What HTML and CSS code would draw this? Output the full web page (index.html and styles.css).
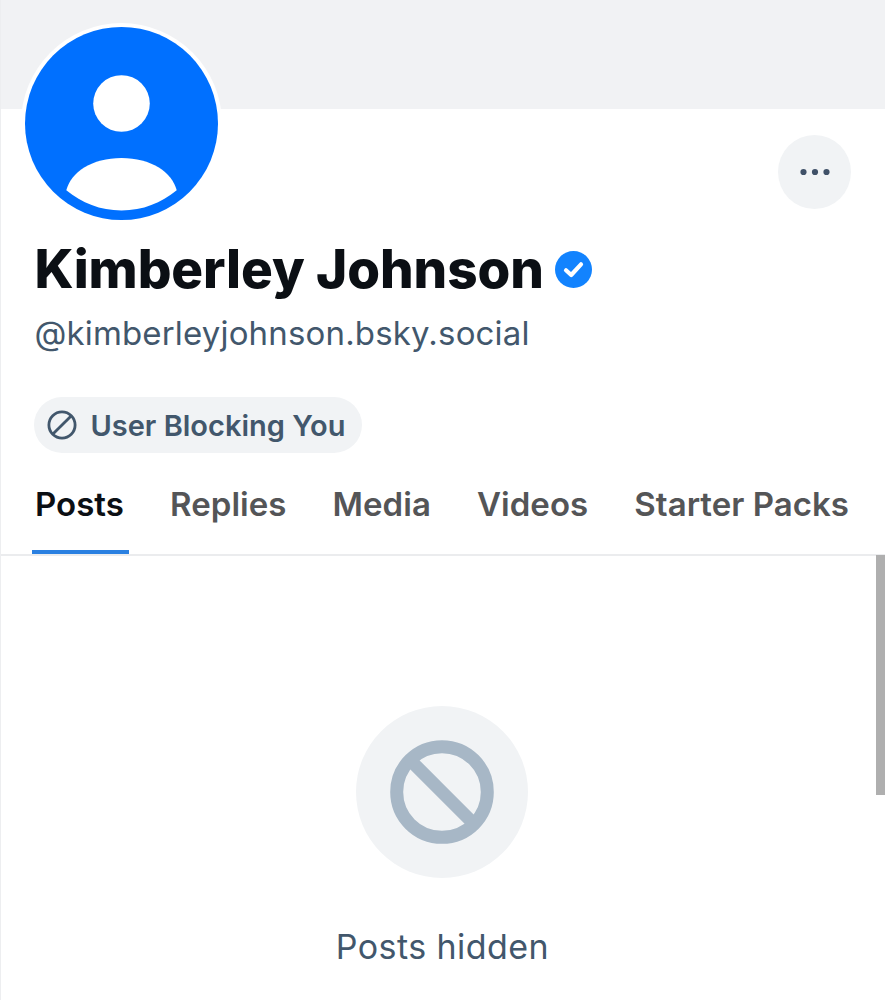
FILE: index.html
```html
<!DOCTYPE html>
<html lang="en">
<head>
    <meta charset="UTF-8">
    <meta name="viewport" content="width=device-width, initial-scale=1.0">
    <title>Kimberley Johnson (@kimberleyjohnson.bsky.social)</title>
    <link rel="stylesheet" href="styles.css">
</head>
<body>
    <div class="profile">
        <div class="banner"></div>
        <div class="avatar">
            <svg viewBox="0 0 194 193">
                <circle cx="96.5" cy="96.5" r="96.5" fill="#0070ff"/>
                <circle cx="96.5" cy="76.5" r="28.3" fill="#fff"/>
                <path d="M41.3 163.3C46 145 67 131 96.5 131S147 145 151.7 163.3C136 176 118 183.5 96.5 183.5S57 176 41.3 163.3Z" fill="#fff"/>
            </svg>
        </div>

        <div class="header">
            <div class="actions">
                <button class="more" aria-label="More options">
                    <svg viewBox="0 0 30 8">
                        <circle cx="3.5" cy="4" r="3.1"/>
                        <circle cx="15" cy="4" r="3.1"/>
                        <circle cx="26.5" cy="4" r="3.1"/>
                    </svg>
                </button>
            </div>
            <div class="name-row">
                <h1 class="name">Kimberley Johnson</h1>
                <svg class="verified" viewBox="0 0 37 37">
                    <circle cx="18.5" cy="18.5" r="18.5" fill="#1283fe"/>
                    <path d="M11 19.3L16.2 24L26 13.3" fill="none" stroke="#fff" stroke-width="4.2" stroke-linecap="round" stroke-linejoin="round"/>
                </svg>
            </div>
            <p class="handle">@kimberleyjohnson.bsky.social</p>
            <div class="label">
                <svg viewBox="0 0 30 30">
                    <circle cx="15" cy="15" r="13.1"/>
                    <path d="M5.9 24.1L24.1 5.9"/>
                </svg>
                <span>User Blocking You</span>
            </div>
        </div>

        <div class="tabs">
            <a class="tab active">Posts</a>
            <a class="tab">Replies</a>
            <a class="tab">Media</a>
            <a class="tab">Videos</a>
            <a class="tab">Starter Packs</a>
        </div>

        <div class="feed">
            <div class="empty">
                <div class="empty-icon">
                    <svg viewBox="0 0 104 104">
                        <circle cx="52" cy="52" r="45.3"/>
                        <path d="M20 20L84 84"/>
                    </svg>
                </div>
                <p>Posts hidden</p>
            </div>
            <div class="scrollbar"></div>
        </div>
    </div>
</body>
</html>
```
FILE: styles.css
```css
* {
    box-sizing: border-box;
}

body {
    font-family: Inter, "Liberation Sans", sans-serif;
    margin: 0;
    background-color: #fff;
    color: #0b0f14;
}

h1, p {
    margin: 0;
}

svg {
    display: block;
}

.profile {
    position: relative;
    display: flex;
    flex-direction: column;
    height: 1000px;
    border-left: 1px solid #edeef0;
    overflow: hidden;
}

.banner {
    height: 108.5px;
    background-color: #f1f2f4;
}

/* Overlaps the banner and the header */
.avatar {
    position: absolute;
    top: 23px;
    left: 20.4px;
    width: 201px;
    height: 201px;
    padding: 4px;
    border-radius: 50%;
    background-color: #fff;
}

.avatar svg {
    width: 194px;
    height: 193px;
}

.header {
    height: 345px;
    padding: 26.5px 34px 0 33.4px;
}

.actions {
    display: flex;
    justify-content: flex-end;
}

.more {
    display: flex;
    align-items: center;
    justify-content: center;
    width: 73px;
    height: 74px;
    padding: 0;
    border: none;
    border-radius: 50%;
    background-color: #f1f3f5;
}

.more svg {
    width: 30px;
    height: 8px;
    fill: #405168;
}

.name-row {
    display: flex;
    align-items: center;
    gap: 11px;
    height: 64px;
    margin-top: 28px;
}

.name {
    font-size: 53px;
    line-height: 64px;
    font-weight: 800;
    letter-spacing: -0.08px;
    white-space: nowrap;
}

.verified {
    width: 37px;
    height: 37px;
}

.handle {
    margin-top: 12px;
    font-size: 33px;
    line-height: 40px;
    letter-spacing: 0.17px;
    color: #42576c;
}

.label {
    display: inline-flex;
    align-items: center;
    gap: 13px;
    height: 56px;
    margin-top: 44px;
    padding: 0 17px 0 13px;
    border-radius: 28px;
    background-color: #f1f3f5;
    color: #42576c;
    font-size: 29px;
    font-weight: 600;
    white-space: nowrap;
}

.label svg {
    width: 30px;
    height: 30px;
    fill: none;
    stroke: #42576c;
    stroke-width: 2.8;
}

.tabs {
    display: flex;
    justify-content: space-between;
    height: 102px;
    padding: 0 31px;
    border-bottom: 2px solid #ebecee;
}

.tab {
    height: 100px;
    padding: 30px 5px 0 3px;
    border-bottom: 4px solid transparent;
    font-size: 33px;
    line-height: 40px;
    font-weight: 600;
    letter-spacing: 0.03px;
    color: #545557;
    white-space: nowrap;
}

.tab.active {
    border-bottom-color: #2a80e1;
    color: #0b0f14;
}

.feed {
    display: flex;
    flex: 1;
}

.empty {
    display: flex;
    flex: 1;
    flex-direction: column;
    align-items: center;
    padding: 150px 0 0 7.8px;
}

.empty-icon {
    display: flex;
    align-items: center;
    justify-content: center;
    width: 172px;
    height: 172px;
    border-radius: 50%;
    background-color: #f1f3f5;
}

.empty-icon svg {
    width: 104px;
    height: 104px;
    fill: none;
    stroke: #a7b7c6;
    stroke-width: 13;
}

.empty p {
    margin-top: 48px;
    font-size: 34px;
    line-height: 42px;
    letter-spacing: 0.45px;
    color: #42576c;
}

.scrollbar {
    width: 9px;
    height: 240px;
    margin-top: -1px;
    background-color: #afafaf;
}
```
